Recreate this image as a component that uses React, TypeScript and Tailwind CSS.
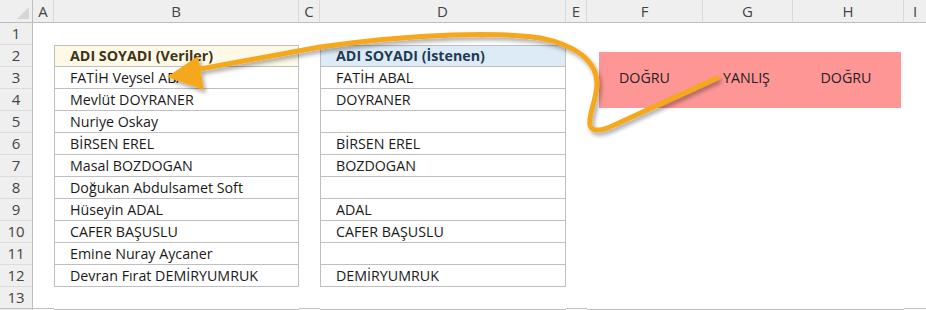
import React from "react";

const given = [
  "FATİH Veysel ABAL",
  "Mevlüt DOYRANER",
  "Nuriye Oskay",
  "BİRSEN EREL",
  "Masal BOZDOGAN",
  "Doğukan Abdulsamet Soft",
  "Hüseyin ADAL",
  "CAFER BAŞUSLU",
  "Emine Nuray Aycaner",
  "Devran Fırat DEMİRYUMRUK",
];

const wanted = [
  "FATİH ABAL",
  "DOYRANER",
  "",
  "BİRSEN EREL",
  "BOZDOGAN",
  "",
  "ADAL",
  "CAFER BAŞUSLU",
  "",
  "DEMİRYUMRUK",
];

const rowNums = Array.from({ length: 13 }, (_, i) => i + 1);

function ColHead({ label, className = "", last }: { label: string; className?: string; last?: boolean }) {
  return (
    <div
      className={`h-[23px] shrink-0 flex items-center justify-center bg-[#efefef] border-b border-[#bdbdbd] text-[#444] text-[15px] ${last ? "" : "border-r border-r-[#d9d9d9]"} ${className}`}
    >
      {label}
    </div>
  );
}

// a plain empty sheet column: letter on top, blank rows below
function BlankCol({ label, width, last }: { label: string; width: string; last?: boolean }) {
  return (
    <div className={`flex flex-col ${width}`}>
      <ColHead label={label} last={last} />
      <div className="h-[286px] border-b border-[#bdbdbd]" />
    </div>
  );
}

function NameTable({
  label,
  title,
  items,
  head,
  width,
}: {
  label: string;
  title: string;
  items: string[];
  head: string;
  width: string;
}) {
  return (
    <div className={`flex flex-col shrink-0 ${width}`}>
      <ColHead label={label} />
      <div className="h-[22px]" />
      <div className={`h-[22px] flex items-center pl-[15px] border border-[#bfbfbf] font-bold ${head}`}>{title}</div>
      {items.map((t, i) => (
        <div
          key={i}
          className="h-[22px] flex items-center pl-[15px] border-x border-b border-[#bfbfbf] text-[#1a1a1a] whitespace-nowrap"
        >
          {t}
        </div>
      ))}
      <div className="flex-1 border-b border-[#bdbdbd]" />
    </div>
  );
}

function CurvedArrow() {
  return (
    <svg className="absolute inset-0 pointer-events-none" width="926" height="310" viewBox="0 0 926 310">
      <defs>
        <filter id="shade" x="-10%" y="-20%" width="120%" height="140%">
          <feDropShadow dx="2" dy="3" stdDeviation="2" floodColor="#000" floodOpacity="0.35" />
        </filter>
      </defs>
      <g filter="url(#shade)">
        <path
          d="M717,78 C680,95 640,113 610,127 Q592,134 590,125 C588,114 597,100 597,83 C596,60 575,45 540,38 C500,32 420,33 320,47 L200,69"
          fill="none"
          stroke="#f5a81c"
          strokeWidth="5"
          strokeLinecap="round"
          strokeLinejoin="round"
        />
        <polygon points="167,77 198,56 204,90" fill="#f5a81c" />
      </g>
    </svg>
  );
}

export default function App() {
  return (
    <div className="relative w-[926px] h-[310px] bg-white overflow-hidden text-[14.25px] font-['Open_Sans','Noto_Sans',sans-serif]">
      <div className="flex h-[310px]">
        {/* row numbers */}
        <div className="flex flex-col w-[33px] shrink-0 bg-[#efefef] border-r border-[#bdbdbd]">
          <div className="relative h-[23px] border-b border-[#bdbdbd]">
            <div className="absolute right-[3px] bottom-[3px] w-0 h-0 border-l-[12px] border-l-transparent border-b-[12px] border-b-[#d6d6d6]" />
          </div>
          {rowNums.map((r) => (
            <div
              key={r}
              className={`h-[22px] flex items-center justify-center text-[#444] text-[15px] border-b ${r < 13 ? "border-b-[#dcdcdc]" : "border-b-[#bdbdbd]"}`}
            >
              {r}
            </div>
          ))}
        </div>

        <BlankCol label="A" width="w-[21px] shrink-0" />
        <NameTable label="B" width="w-[245px]" title="ADI SOYADI (Veriler)" items={given} head="bg-[#fdf9e6] text-[#3d3419]" />
        <BlankCol label="C" width="w-[21px] shrink-0" />
        <NameTable label="D" width="w-[246px]" title="ADI SOYADI (İstenen)" items={wanted} head="bg-[#ddebf7] text-[#1f3a52]" />
        <BlankCol label="E" width="w-[21px] shrink-0" />

        {/* F..H with the result band */}
        <div className="flex flex-col w-[317px] shrink-0">
          <div className="flex">
            <ColHead label="F" className="w-[116px]" />
            <ColHead label="G" className="w-[90px]" />
            <ColHead label="H" className="w-[111px]" />
          </div>
          <div className="h-[29px]" />
          <div className="h-[56px] ml-[12px] mr-[3px] bg-[#ff9696]">
            <div className="flex h-full -ml-[12px] pb-[4px] items-center text-[#222]">
              <div className="w-[116px] text-center">DOĞRU</div>
              <div className="w-[90px] text-center">YANLIŞ</div>
              <div className="w-[111px] text-center">DOĞRU</div>
            </div>
          </div>
          <div className="flex-1 border-b border-[#bdbdbd]" />
        </div>

        <BlankCol label="I" width="flex-1" last />
      </div>

      <CurvedArrow />
    </div>
  );
}
